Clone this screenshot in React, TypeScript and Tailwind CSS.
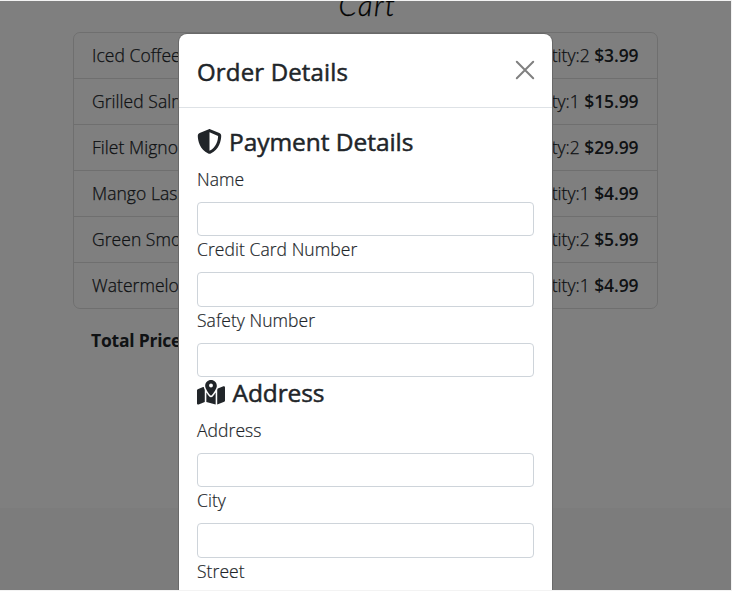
import { FaMapLocationDot, FaShieldHalved } from "react-icons/fa6";

const items = [
  { name: "Iced Coffee", quantity: 2, price: "$3.99" },
  { name: "Grilled Salmon", quantity: 1, price: "$15.99" },
  { name: "Filet Mignon", quantity: 2, price: "$29.99" },
  { name: "Mango Lassi", quantity: 1, price: "$4.99" },
  { name: "Green Smoothie", quantity: 2, price: "$5.99" },
  { name: "Watermelon Juice", quantity: 1, price: "$4.99" },
];

function Field({ label }: { label: string }) {
  return (
    <label className="block">
      <span className="block h-[36px] text-[17.5px] leading-[27px] font-light tracking-[0.06px] [-webkit-text-stroke:0.2px]">{label}</span>
      <input className="block h-[34.45px] w-full rounded-[4px] border border-[#ced4da] bg-white px-3" />
    </label>
  );
}

function OrderDialog() {
  return (
    <div className="absolute top-[34px] left-[179px] h-[700px] w-[373px] rounded-[8px] bg-white shadow-[0_0_0_1px_#696969]">
      <div className="flex h-[74px] items-center justify-between border-b border-[#dee2e6] px-[18px]">
        <h2 className="pt-[3px] text-[24px] leading-[32px] tracking-[0.16px] [-webkit-text-stroke:0.5px]">Order Details</h2>
        <button aria-label="Close" className="mt-[-2px] mr-[-1px] flex size-5">
          <svg viewBox="0 0 20 20" className="size-5" fill="none" stroke="#808080" strokeWidth="2" strokeLinecap="round">
            <path d="M1.8 1.8 18.2 18.2M18.2 1.8 1.8 18.2" />
          </svg>
        </button>
      </div>
      <form className="px-[18px] pt-[18.3px]">
        <h3 className="flex h-[39.7px] items-start text-[24.5px] leading-[31px] tracking-[-0.05px] [-webkit-text-stroke:0.5px]">
          <FaShieldHalved stroke="none" className="mt-[3px] mr-[7px] size-[25px]" />
          Payment Details
        </h3>
        <Field label="Name" />
        <Field label="Credit Card Number" />
        <Field label="Safety Number" />
        <h3 className="flex h-[39.7px] items-start text-[24.5px] leading-[31px] tracking-[-0.1px] [-webkit-text-stroke:0.5px]">
          <FaMapLocationDot stroke="none" className="mt-[3px] mr-[7.5px] h-[25px] w-[28px]" />
          Address
        </h3>
        <Field label="Address" />
        <Field label="City" />
        <Field label="Street" />
      </form>
    </div>
  );
}

export default function App() {
  return (
    <div className="h-[591px] w-[732px] overflow-hidden bg-[#f3f3f3] pt-px font-['Open_Sans',sans-serif] text-[#212529]">
      <div className="relative h-[589px] w-[731px] overflow-hidden">
        <div className="h-[507px] bg-white">
          <h1 className="h-[31px] pl-[4px] text-center font-['Lato',sans-serif] text-[29px] leading-[8px] font-light tracking-[1.5px] text-black italic [-webkit-text-stroke:0.3px]">
            Cart
          </h1>
          <ul className="ml-[73px] w-[585px] divide-y divide-[#dfdfdf] rounded-[7px] border border-[#dfdfdf]">
            {items.map((item) => (
              <li key={item.name} className="flex h-[46px] items-center justify-between pr-[18.5px] pl-[18px] text-[17.5px] font-light last:h-[45px]">
                <span className="tracking-[0.05px] [-webkit-text-stroke:0.25px]">{item.name}</span>
                <span className="[-webkit-text-stroke:0.25px]">
                  Quantity:{item.quantity}{" "}
                  <b className="font-semibold tracking-[-0.1px] [-webkit-text-stroke:0]">{item.price}</b>
                </span>
              </li>
            ))}
          </ul>
          <p className="mt-[18px] ml-[91px] text-[17.5px] leading-[27px] font-bold tracking-[-0.22px]">Total Price: $64.94</p>
        </div>
        <div className="h-[82px] bg-[#f8f8f8]" />
      </div>
      <div className="absolute top-0 left-0 h-[590px] w-[731px] overflow-hidden">
        <div className="mt-px h-[589px] bg-black/50" />
        <OrderDialog />
      </div>
    </div>
  );
}
